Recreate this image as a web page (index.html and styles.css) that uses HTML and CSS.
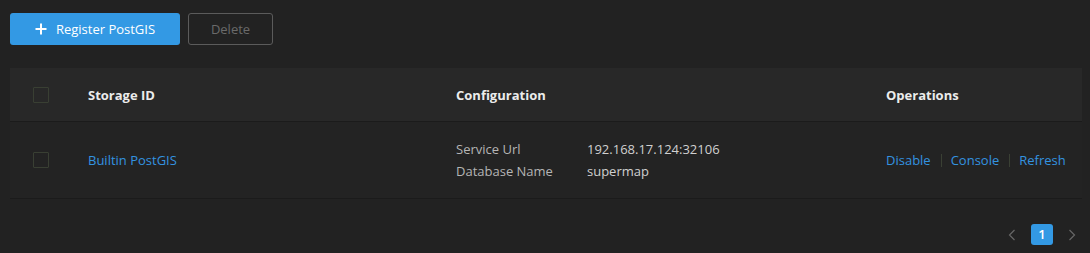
FILE: index.html
```html
<!DOCTYPE html>
<html lang="en">
<head>
    <meta charset="UTF-8">
    <title>PostGIS Storage</title>
    <link rel="stylesheet" href="styles.css">
</head>
<body>
    <div class="toolbar">
        <button class="btn btn-primary">
            <svg class="plus" width="12" height="12" viewBox="0 0 12 12"><path d="M6 0.5V11.5M0.5 6H11.5" stroke="#fff" stroke-width="2"/></svg>
            Register PostGIS
        </button>
        <button class="btn btn-disabled">Delete</button>
    </div>

    <table class="grid">
        <thead>
            <tr>
                <th class="col-check"><span class="check"></span></th>
                <th class="col-id">Storage ID</th>
                <th class="col-config">Configuration</th>
                <th class="col-ops">Operations</th>
            </tr>
        </thead>
        <tbody>
            <tr>
                <td class="col-check"><span class="check"></span></td>
                <td class="col-id"><a href="#">Builtin PostGIS</a></td>
                <td class="col-config">
                    <div class="kv"><span class="key">Service Url</span><span class="val">192.168.17.124:32106</span></div>
                    <div class="kv"><span class="key">Database Name</span><span class="val">supermap</span></div>
                </td>
                <td class="col-ops">
                    <a href="#">Disable</a><span class="sep"></span><a href="#">Console</a><span class="sep"></span><a href="#">Refresh</a>
                </td>
            </tr>
        </tbody>
    </table>

    <div class="pager">
        <svg class="arrow" width="8" height="12" viewBox="0 0 8 12"><path d="M6.5 1L1.5 6L6.5 11" fill="none" stroke="#666" stroke-width="1.2"/></svg>
        <span class="page active">1</span>
        <svg class="arrow" width="8" height="12" viewBox="0 0 8 12"><path d="M1.5 1L6.5 6L1.5 11" fill="none" stroke="#666" stroke-width="1.2"/></svg>
    </div>
</body>
</html>
```

FILE: styles.css
```css
body {
    margin: 0;
    padding: 13px 8px 0 10px;
    background: #222222;
    font-family: "Open Sans", "Noto Sans", sans-serif;
    font-size: 13px;
    color: #cfcfcf;
    height: 253px;
    box-sizing: border-box;
    overflow: hidden;
}

/* Toolbar */
.toolbar {
    display: flex;
    gap: 8px;
}

.btn {
    height: 32px;
    border-radius: 3px;
    font-family: inherit;
    font-size: 13px;
    padding: 0 16px;
    cursor: pointer;
}

.btn-primary {
    width: 170px;
    background: #3399e4;
    border: none;
    color: #ffffff;
    display: flex;
    align-items: center;
    justify-content: center;
}

.plus {
    margin-right: 9px;
}

.btn-disabled {
    width: 85px;
    background: transparent;
    border: 1px solid #5b5b5b;
    color: #6a6a6a;
}

/* Table */
.grid {
    width: 1072px;
    margin-top: 23px;
    border-collapse: collapse;
}

.grid th {
    height: 53px;
    background: #282828;
    color: #ececec;
    font-weight: 700;
    text-align: left;
    border-bottom: 1px solid #1b1b1b;
    padding: 0;
}

.grid td {
    height: 76px;
    background: #232323;
    border-bottom: 1px solid #1b1b1b;
    padding: 0;
}

.col-check {
    width: 78px;
    padding-left: 23px !important;
    box-sizing: border-box;
}

.check {
    display: block;
    width: 14px;
    height: 14px;
    border: 1px solid #393f33;
    border-radius: 1px;
}

.col-id {
    width: 368px;
}

.col-config {
    width: 430px;
}

.grid a {
    color: #3393e0;
    text-decoration: none;
}

.kv {
    display: flex;
    line-height: 22px;
}

.key {
    width: 131px;
    color: #b5b5b5;
}

.val {
    color: #d0d0d0;
}

.col-ops {
    white-space: nowrap;
}

.sep {
    display: inline-block;
    width: 1px;
    height: 13px;
    background: #3a4034;
    margin: 0 9px 0 10px;
    vertical-align: -2px;
}

/* Pagination */
.pager {
    display: flex;
    justify-content: flex-end;
    align-items: center;
    gap: 15px;
    margin-top: 25px;
    padding-right: 6px;
}

.page {
    width: 22px;
    height: 21px;
    border-radius: 3px;
    text-align: center;
    line-height: 21px;
    font-size: 13px;
}

.page.active {
    background: #3399e4;
    color: #ffffff;
    font-weight: 600;
}
```
